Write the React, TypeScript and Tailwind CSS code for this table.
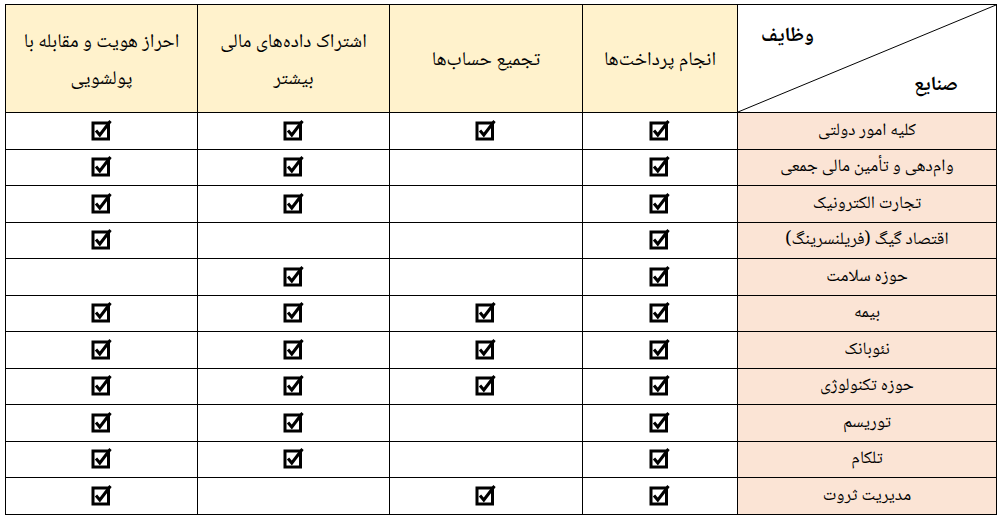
import React from "react";

const rows: [string, boolean, boolean, boolean, boolean][] = [
  ["کلیه امور دولتی", true, true, true, true],
  ["وام‌دهی و تأمین مالی جمعی", true, false, true, true],
  ["تجارت الکترونیک", true, false, true, true],
  ["اقتصاد گیگ (فریلنسرینگ)", true, false, false, true],
  ["حوزه سلامت", true, false, true, false],
  ["بیمه", true, true, true, true],
  ["نئوبانک", true, true, true, true],
  ["حوزه تکنولوژی", true, true, true, true],
  ["توریسم", true, false, true, true],
  ["تلکام", true, false, true, true],
  ["مدیریت ثروت", true, true, false, true],
];

function Check() {
  return (
    <svg width="22" height="22" viewBox="0 0 22 22" className="inline-block align-middle">
      <rect x="2" y="4" width="15.5" height="16" fill="none" stroke="#000" strokeWidth="3" />
      <path d="M5 11.5 L8.8 16 L19.5 2" fill="none" stroke="#000" strokeWidth="3" strokeLinejoin="miter" />
    </svg>
  );
}

export default function App() {
  const cell = "border border-black text-center align-middle p-0";
  const head = `${cell} bg-[#fff2cc] font-normal text-[19.5px] leading-[37px] pt-[4px]`;
  return (
    <div className="bg-white w-[1005px] h-[519px] pt-[4px] pl-[5px] font-['Noto_Naskh_Arabic','Noto_Sans_Arabic','DejaVu_Sans',sans-serif] text-black">
      <table dir="rtl" className="border-collapse table-fixed w-[991px]">
        <colgroup>
          <col className="w-[259px]" />
          <col className="w-[155px]" />
          <col className="w-[193px]" />
          <col className="w-[192px]" />
          <col className="w-[192px]" />
        </colgroup>
        <thead>
          <tr className="h-[107px]">
            <th className={`${cell} relative bg-white`}>
              <svg className="absolute inset-0 w-full h-full" viewBox="0 0 259 107" preserveAspectRatio="none">
                <line x1="259" y1="0" x2="0" y2="107" stroke="#000" strokeWidth="1" />
              </svg>
              <div className="relative h-[107px] text-[20px] font-bold leading-[28px]">
                <span className="absolute left-[23px] top-[18px]">وظایف</span>
                <span className="absolute right-[38px] top-[67px]">صنایع</span>
              </div>
            </th>
            <th className={head}>انجام پرداخت‌ها</th>
            <th className={head}>تجمیع حساب‌ها</th>
            <th className={head}>
              اشتراک داده‌های مالی
              <br />
              بیشتر
            </th>
            <th className={head}>
              احراز هویت و مقابله با
              <br />
              پولشویی
            </th>
          </tr>
        </thead>
        <tbody>
          {rows.map((r, i) => (
            <tr key={i} className="h-[36.5px]">
              <td className={`${cell} bg-[#fbe4d5] text-[17.5px] leading-[24px]`}>{r[0]}</td>
              <td className={cell}>{r[1] && <Check />}</td>
              <td className={cell}>{r[2] && <Check />}</td>
              <td className={cell}>{r[3] && <Check />}</td>
              <td className={cell}>{r[4] && <Check />}</td>
            </tr>
          ))}
        </tbody>
      </table>
    </div>
  );
}
